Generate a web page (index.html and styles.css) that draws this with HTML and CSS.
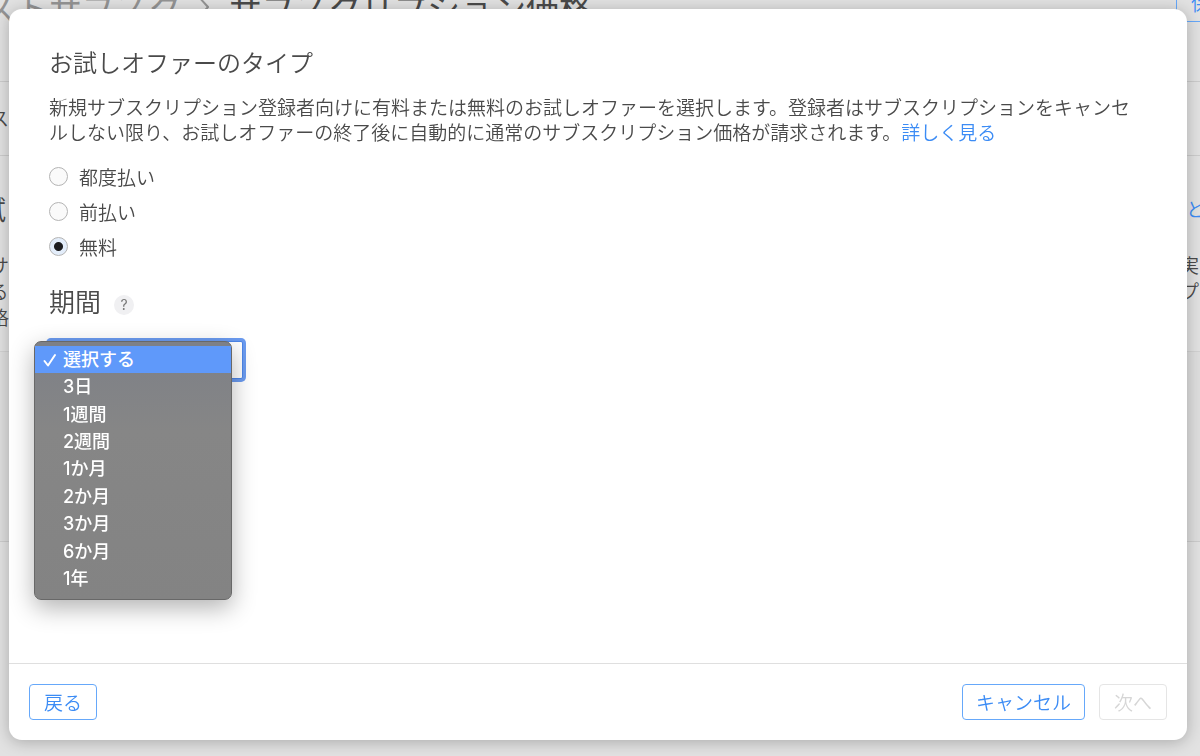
FILE: index.html
```html
<!DOCTYPE html>
<html lang="ja">
<head>
    <meta charset="UTF-8">
    <meta name="viewport" content="width=device-width, initial-scale=1.0">
    <title>サブスクリプション価格</title>
    <link rel="stylesheet" href="styles.css">
</head>
<body>
    <!-- Page behind the dialog -->
    <div class="page" aria-hidden="true">
        <div class="page-header">
            <div class="breadcrumb">
                <span class="crumb">テストサブスク</span>
                <svg class="chevron" viewBox="0 0 12 24" fill="none" stroke="currentColor" stroke-width="2"><path d="M1 1l10 11L1 23"/></svg>
                <span>サブスクリプション価格</span>
            </div>
            <button class="btn save">保存</button>
        </div>
        <div class="page-tabs">サブス</div>
        <div class="page-section">
            <div class="page-row section-title"><span>お試し</span><a href="#" class="side">と</a></div>
            <div class="page-row"><span>新規サ</span><span class="side">実</span></div>
            <div class="page-row"><span>できる</span><span class="side">プ</span></div>
            <div class="page-row"><span>の価格</span></div>
        </div>
        <div class="page-panel"></div>
    </div>

    <div class="modal" role="dialog" aria-labelledby="modalTitle">
        <div class="modal-body">
            <h2 id="modalTitle">お試しオファーのタイプ</h2>
            <p class="description">新規サブスクリプション登録者向けに有料または無料のお試しオファーを選択します。登録者はサブスクリプションをキャンセルしない限り、お試しオファーの終了後に自動的に通常のサブスクリプション価格が請求されます。<a href="#">詳しく見る</a></p>

            <div class="offer-types">
                <label><input type="radio" name="offerType">都度払い</label>
                <label><input type="radio" name="offerType">前払い</label>
                <label><input type="radio" name="offerType" checked>無料</label>
            </div>

            <div class="duration-header">
                <label class="duration-label" for="duration">期間</label>
                <button class="help" aria-label="ヘルプ">?</button>
            </div>
            <div class="select-wrap">
                <select id="duration" class="duration">
                    <option></option>
                </select>
                <div class="menu" role="listbox">
                    <button class="menu-item selected" role="option" aria-selected="true">
                        <svg class="check" viewBox="0 0 14 14" fill="none" stroke="currentColor" stroke-width="2" stroke-linecap="round" stroke-linejoin="round"><path d="M1.5 8l3.5 4.5L12 2"/></svg>選択する
                    </button>
                    <button class="menu-item" role="option">3日</button>
                    <button class="menu-item" role="option">1週間</button>
                    <button class="menu-item" role="option">2週間</button>
                    <button class="menu-item" role="option">1か月</button>
                    <button class="menu-item" role="option">2か月</button>
                    <button class="menu-item" role="option">3か月</button>
                    <button class="menu-item" role="option">6か月</button>
                    <button class="menu-item" role="option">1年</button>
                </div>
            </div>
        </div>
        <div class="modal-footer">
            <button class="btn">戻る</button>
            <div class="footer-right">
                <button class="btn">キャンセル</button>
                <button class="btn" disabled>次へ</button>
            </div>
        </div>
    </div>
</body>
</html>
```
FILE: styles.css
```css
* {
    margin: 0;
    padding: 0;
    box-sizing: border-box;
}
body {
    background-color: #e2e2e2;
    color: #4a4a4a;
    font-family: 'Noto Sans CJK JP', sans-serif;
    font-size: 19px;
    font-weight: 350;
    line-height: 26px;
    overflow: hidden;
}
button, select {
    font: inherit;
    color: inherit;
}
a {
    color: #3c8cf5;
    text-decoration: none;
}

/* Page behind the dialog */
.page {
    margin: -16px -50px 0;
}
.page-header {
    display: flex;
    justify-content: space-between;
    align-items: flex-start;
    height: 98px;
    padding-right: 6px;
    border-bottom: 1px solid #cccccc;
}
.breadcrumb {
    display: flex;
    align-items: center;
    font-size: 33px;
    font-weight: 400;
    line-height: 46px;
}
.crumb {
    color: #949494;
}
.chevron {
    width: 12px;
    height: 24px;
    margin: 0 20px 0 16px;
    color: #949494;
}
.page-tabs {
    height: 74px;
    padding: 23px 2px 0;
    border-bottom: 1px solid #cccccc;
}
.page-section {
    height: 195px;
    padding: 32px 2px 0;
}
.page-row {
    display: flex;
    justify-content: space-between;
}
.side {
    width: 68px;
}
.section-title {
    margin-bottom: 22px;
    font-size: 27px;
    line-height: 42px;
}
.section-title .side {
    width: 62px;
    font-size: 19px;
}
.page-panel {
    height: 191px;
    background-color: #dedede;
    border-top: 1px solid #d2d2d2;
    border-bottom: 1px solid #cccccc;
}

/* Buttons */
.btn {
    height: 36px;
    min-width: 68px;
    padding: 0 13px;
    background-color: transparent;
    border: 1px solid #66a8fa;
    border-radius: 4px;
    color: #3c8cf5;
    line-height: 32px;
}
.btn:disabled {
    border-color: #e5e5e5;
    color: #d6d6d6;
}
.btn.save {
    height: 38px;
}

/* Modal */
.modal {
    position: fixed;
    inset: 9px 13px 16px 9px;
    display: flex;
    flex-direction: column;
    background-color: white;
    border-radius: 13px;
    box-shadow: 0 2px 16px rgba(0,0,0,0.25);
}
.modal-body {
    flex: 1;
    padding: 34px 40px 0;
}
.modal h2 {
    font-size: 24px;
    font-weight: 350;
    line-height: 38px;
}
.description {
    margin-top: 13px;
    line-height: 25px;
}
.offer-types {
    margin-top: 15px;
}
.offer-types label {
    display: flex;
    align-items: center;
    height: 35px;
}
.offer-types input {
    appearance: none;
    width: 19px;
    height: 19px;
    margin-right: 11px;
    background-color: #fafafa;
    border: 1px solid #b4b4b4;
    border-radius: 50%;
}
.offer-types input:checked {
    background: radial-gradient(circle, #1d1d1f 4px, #e3edfa 5px);
}
.duration-header {
    display: flex;
    align-items: center;
    margin-top: 18px;
}
.duration-label {
    font-size: 26px;
    line-height: 38px;
}
.help {
    width: 20px;
    height: 20px;
    margin: 8px 0 0 13px;
    background-color: #f0f0f2;
    border: none;
    border-radius: 50%;
    color: #777777;
    font-family: Inter, sans-serif;
    font-size: 14px;
    font-weight: 400;
    line-height: 20px;
}

/* Duration select and its open menu */
.select-wrap {
    position: relative;
    width: 194px;
    margin-top: 21px;
}
.duration {
    display: block;
    appearance: none;
    width: 100%;
    height: 38px;
    background-color: white;
    border: 1px solid #4d86e8;
    border-radius: 2px;
    box-shadow: 0 0 0 3px #6b9bf0;
}
.menu {
    position: absolute;
    top: 0;
    left: -15px;
    display: grid;
    grid-auto-rows: 1fr;
    width: 198px;
    height: 259px;
    padding: 4px 0 6px;
    background: linear-gradient(#7d8087, #868686 35%, #838383);
    border: 1px solid #686868;
    border-radius: 7px;
    box-shadow: 0 8px 24px rgba(0,0,0,0.3);
}
.menu-item {
    position: relative;
    padding-left: 28px;
    background: none;
    border: none;
    color: white;
    font-family: Inter, 'Noto Sans CJK JP', sans-serif;
    font-size: 18px;
    font-weight: 500;
    line-height: 26px;
    text-align: left;
}
.menu-item.selected {
    background-color: #5f99fa;
}
.check {
    position: absolute;
    top: 7px;
    left: 8px;
    width: 14px;
    height: 14px;
}

/* Footer */
.modal-footer {
    display: flex;
    justify-content: space-between;
    padding: 20px;
    border-top: 1px solid #dfdfdf;
}
.footer-right {
    display: flex;
    gap: 14px;
}
```
